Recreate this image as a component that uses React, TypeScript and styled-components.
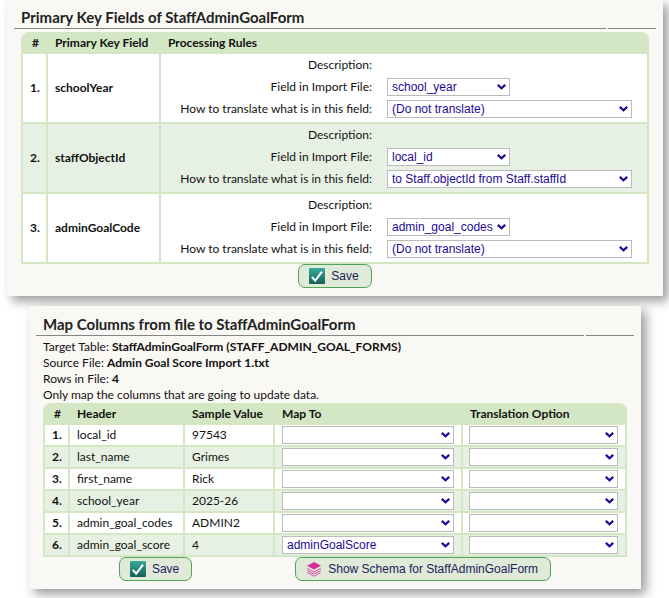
import React, { useId, useState } from 'react';
import styled, { createGlobalStyle } from 'styled-components';

const GlobalStyle = createGlobalStyle`
  * { box-sizing: border-box; }
  body {
    margin: 0;
    background: #fff;
    color: #111;
    font: 12px/16px Lato, "Open Sans", sans-serif;
  }
`;

const line = '#d4e7c5';
const stripe = '#e7f1e3';

const Page = styled.main`
  display: flex;
  flex-direction: column;
  gap: 10px;
  padding-bottom: 9px;
`;

const Panel = styled.section<{ $inset?: boolean }>`
  margin: ${(p) => (p.$inset ? '0 28px 0 29px' : '0 6px 0 7px')};
  padding: ${(p) => (p.$inset ? '4px 7px 8px' : '3px 7px 8px')};
  background: #f9f8f4;
  box-shadow: 5px 5px 10px rgba(0, 0, 0, 0.4);
`;

const TitleBar = styled.header`
  display: grid;
  grid-template-columns: 1fr 48px;
  gap: 2px;
  color: #222;

  &::after {
    content: '';
    border-bottom: 1px solid #848484;
  }
`;

const Title = styled.h2`
  margin: 0;
  padding: 3px 7px 0;
  border-bottom: 1px solid #848484;
  font-size: 15px;
  font-weight: 700;
  line-height: 22px;
`;

const Body = styled.div`
  padding: 3px 7px 0;
`;

const Info = styled.p`
  margin: 0;
`;

const Table = styled.table`
  width: 100%;
  table-layout: fixed;
  border-collapse: separate;
  border-spacing: 0;
  border: solid ${line};
  border-width: 0 0 0 2px;
  border-radius: 8px 8px 0 0;
  overflow: hidden;
`;

const Col = styled.col<{ $w?: number }>`
  width: ${(p) => (p.$w ? `${p.$w}px` : 'auto')};
`;

const HeadCell = styled.th<{ $end?: boolean }>`
  height: 22px;
  padding: ${(p) => (p.$end ? '0 9px 0 0' : '0 7px')};
  background: ${line};
  text-align: ${(p) => (p.$end ? 'right' : 'left')};
  white-space: nowrap;
  font-weight: 700;
`;

const Row = styled.tr`
  background: #fff;
  &:nth-child(even) { background: ${stripe}; }
`;

const Cell = styled.td<{ $bold?: boolean }>`
  height: 22px;
  padding: 0 7px;
  border: solid ${line};
  border-width: 0 2px 2px 0;
  font-weight: ${(p) => (p.$bold ? 700 : 400)};
`;

const NumberCell = styled(Cell)`
  text-align: right;
  font-weight: 700;
`;

const OptionCell = styled(Cell)`
  padding-left: 6px;
`;

const Rules = styled.div`
  display: grid;
  grid-template-columns: 204px minmax(0, 1fr);
  grid-auto-rows: 22px;
  column-gap: 15px;
  align-items: center;
  padding-bottom: 2px;
`;

const Label = styled.label`
  text-align: right;
  white-space: nowrap;
`;

const SelectBox = styled.span<{ $w?: number }>`
  display: grid;
  grid-template-columns: 1fr 9px;
  align-items: center;
  width: ${(p) => (p.$w ? `${p.$w}px` : '100%')};
  max-width: 100%;

  > * { grid-row: 1; }
`;

const Select = styled.select`
  grid-column: 1 / -1;
  width: 100%;
  height: 18px;
  margin: 0;
  padding: 0 14px 1px 4px;
  appearance: none;
  border: 1px solid #bbb;
  border-radius: 0;
  background: #fff;
  color: #1c0a96;
  font: 12px/16px "Liberation Sans", Arial, sans-serif;
`;

const Chevron = styled.svg`
  grid-column: 2;
  z-index: 1;
  width: 9px;
  height: 6px;
  margin-left: -4px;
  pointer-events: none;
`;

const Actions = styled.footer`
  display: flex;
  justify-content: center;
  gap: 103px;
`;

const Button = styled.button`
  display: flex;
  align-items: center;
  gap: 6px;
  height: 24px;
  padding: 0 12px 0 10px;
  border: 1px solid #4fa457;
  border-radius: 7px;
  background: #dfead8;
  color: #20205c;
  font: 12px/16px "Liberation Sans", Arial, sans-serif;
  white-space: nowrap;
`;

const Icon = styled.svg`
  flex: none;
  width: 16px;
  height: 16px;
`;

function CheckIcon() {
  const id = useId();
  return (
    <Icon viewBox="0 0 16 16" aria-hidden="true">
      <defs>
        <linearGradient id={id} x1="0" y1="0" x2="0" y2="1">
          <stop offset="0" stopColor="#37aa98" />
          <stop offset="1" stopColor="#175f58" />
        </linearGradient>
      </defs>
      <rect width="16" height="16" rx="1" fill={`url(#${id})`} />
      <path d="M2.8 8.8 6.2 12.6 13 3.6" fill="none" stroke="#fff" strokeWidth="2" />
    </Icon>
  );
}

function LayersIcon() {
  return (
    <Icon viewBox="0 0 16 16" aria-hidden="true">
      <path d="M8 1 15 4.8 8 8.6 1 4.8Z" fill="#d42f9c" />
      <path
        d="M1.2 7.3 8 11 14.8 7.3M1.2 9.4 8 13.1 14.8 9.4M1.2 11.5 8 15.2 14.8 11.5"
        fill="none"
        stroke="#d650a8"
        strokeWidth="1"
      />
    </Icon>
  );
}

type DropdownProps = {
  id?: string;
  label?: string;
  width?: number;
  initial?: string;
  options: string[];
};

function Dropdown({ id, label, width, initial = '', options }: DropdownProps) {
  const [value, setValue] = useState(initial);
  return (
    <SelectBox $w={width}>
      <Select id={id} aria-label={label} value={value} onChange={(e) => setValue(e.target.value)}>
        {options.map((o) => (
          <option key={o} value={o}>{o}</option>
        ))}
      </Select>
      <Chevron viewBox="0 0 9 6" aria-hidden="true">
        <path d="M0.8 0.9 4.5 4.3 8.2 0.9" fill="none" stroke="#1c0a96" strokeWidth="2.2" />
      </Chevron>
    </SelectBox>
  );
}

const columns = [
  ['local_id', '97543', ''],
  ['last_name', 'Grimes', ''],
  ['first_name', 'Rick', ''],
  ['school_year', '2025-26', ''],
  ['admin_goal_codes', 'ADMIN2', ''],
  ['admin_goal_score', '4', 'adminGoalScore'],
];
const fileFields = columns.map(([name]) => name);

const noTranslation = '(Do not translate)';
const staffTranslation = 'to Staff.objectId from Staff.staffId';

const keys = [
  { name: 'schoolYear', field: 'school_year', rule: noTranslation },
  { name: 'staffObjectId', field: 'local_id', rule: staffTranslation },
  { name: 'adminGoalCode', field: 'admin_goal_codes', rule: noTranslation },
];

function PrimaryKeys() {
  return (
    <Panel>
      <TitleBar><Title>Primary Key Fields of StaffAdminGoalForm</Title></TitleBar>
      <Body>
        <Table>
          <colgroup>
            <Col $w={25} />
            <Col $w={113} />
            <Col />
          </colgroup>
          <thead>
            <tr>
              <HeadCell $end>#</HeadCell>
              <HeadCell>Primary Key Field</HeadCell>
              <HeadCell>Processing Rules</HeadCell>
            </tr>
          </thead>
          <tbody>
            {keys.map((k, i) => (
              <Row key={k.name}>
                <NumberCell>{i + 1}.</NumberCell>
                <Cell $bold>{k.name}</Cell>
                <Cell>
                  <Rules>
                    <Label as="span">Description:</Label>
                    <span />
                    <Label htmlFor={`field-${k.name}`}>Field in Import File:</Label>
                    <Dropdown id={`field-${k.name}`} width={123} initial={k.field} options={fileFields} />
                    <Label htmlFor={`rule-${k.name}`}>How to translate what is in this field:</Label>
                    <Dropdown
                      id={`rule-${k.name}`}
                      width={245}
                      initial={k.rule}
                      options={[noTranslation, staffTranslation]}
                    />
                  </Rules>
                </Cell>
              </Row>
            ))}
          </tbody>
        </Table>
        <Actions>
          <Button type="button"><CheckIcon />Save</Button>
        </Actions>
      </Body>
    </Panel>
  );
}

function ColumnMap() {
  return (
    <Panel $inset>
      <TitleBar><Title>Map Columns from file to StaffAdminGoalForm</Title></TitleBar>
      <Body>
        <Info>Target Table: <b>StaffAdminGoalForm (STAFF_ADMIN_GOAL_FORMS)</b></Info>
        <Info>Source File: <b>Admin Goal Score Import 1.txt</b></Info>
        <Info>Rows in File: <b>4</b></Info>
        <Info>Only map the columns that are going to update data.</Info>
        <Table>
          <colgroup>
            <Col $w={25} />
            <Col $w={115} />
            <Col $w={90} />
            <Col />
            <Col $w={164} />
          </colgroup>
          <thead>
            <tr>
              <HeadCell $end>#</HeadCell>
              <HeadCell>Header</HeadCell>
              <HeadCell>Sample Value</HeadCell>
              <HeadCell>Map To</HeadCell>
              <HeadCell>Translation Option</HeadCell>
            </tr>
          </thead>
          <tbody>
            {columns.map(([name, sample, target], i) => (
              <Row key={name}>
                <NumberCell>{i + 1}.</NumberCell>
                <Cell>{name}</Cell>
                <Cell>{sample}</Cell>
                <Cell>
                  <Dropdown label={`Map ${name} to`} initial={target} options={['', 'adminGoalScore']} />
                </Cell>
                <OptionCell>
                  <Dropdown label={`Translation option for ${name}`} options={['']} />
                </OptionCell>
              </Row>
            ))}
          </tbody>
        </Table>
        <Actions>
          <Button type="button"><CheckIcon />Save</Button>
          <Button type="button"><LayersIcon />Show Schema for StaffAdminGoalForm</Button>
        </Actions>
      </Body>
    </Panel>
  );
}

export default function App() {
  return (
    <>
      <GlobalStyle />
      <Page>
        <PrimaryKeys />
        <ColumnMap />
      </Page>
    </>
  );
}
